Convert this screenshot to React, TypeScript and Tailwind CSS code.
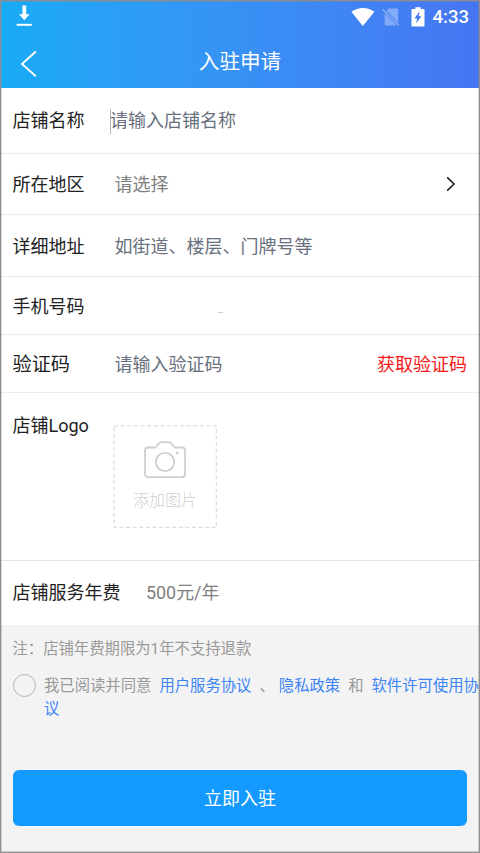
import type { ReactNode } from 'react';

function StatusBar() {
  return (
    <div className="flex h-[33px] items-center justify-between pl-4 pr-[11px] text-white">
      <svg width="16" height="21" viewBox="0 0 16 21" fill="currentColor" className="-mt-[2px]">
        <path d="M6.4 0.6h3.8v8.7h3.3L8.3 15.2 3 9.3h3.4z" />
        <path d="M0.6 18.8h15.2v2H0.6z" />
      </svg>
      <div className="flex items-center">
        <svg width="24" height="20" viewBox="0 0 24 20" fill="currentColor">
          <path d="M0.4 4.8C7 -0.4 17 -0.4 23.4 4.8L11.8 19z" />
        </svg>
        <svg width="18" height="20" viewBox="0 0 18 20" className="ml-[7px]">
          <path d="M6.4 1.5h8.6a1.2 1.2 0 0 1 1.2 1.2v13.2L4.6 3.5zM2.6 6.2L14.6 18.6H4a1.3 1.3 0 0 1-1.3-1.3z" fill="#fff" fillOpacity="0.34" />
          <path d="M0.8 2.4l16 16.2" stroke="#fff" strokeOpacity="0.4" strokeWidth="1.4" />
        </svg>
        <svg width="14" height="20" viewBox="0 0 14 20" className="ml-[11px]">
          <path d="M4.3 0.2h5.4v1.8h3a0.8 0.8 0 0 1 0.8 0.8v16a0.8 0.8 0 0 1-0.8 0.8H1.3a0.8 0.8 0 0 1-0.8-0.8v-16a0.8 0.8 0 0 1 0.8-0.8h3z" fill="#fff" />
          <path d="M8.6 4.2L3.4 11.4h2.8L5 16.6l5.4-7.3H7.6z" fill="#3f76ee" />
        </svg>
        <span className="ml-[8px] text-[18.5px] font-medium leading-5">4:33</span>
      </div>
    </div>
  );
}

function FormRow({ label, className, children }: { label: ReactNode; className: string; children?: ReactNode }) {
  return (
    <div className={`flex items-center border-b border-[#ebebeb] pl-[12.5px] pr-[13px] ${className}`}>
      <span className="w-[102px] shrink-0 text-[#222]">{label}</span>
      {children}
    </div>
  );
}

export default function App() {
  return (
    <div
      lang="zh-CN"
      className="relative flex h-[853px] w-[480px] flex-col overflow-hidden bg-[#f3f3f3] font-[Roboto,'Noto_Sans_CJK_SC',sans-serif] text-[18px] leading-6"
    >
      <header className="h-[88px] bg-linear-to-r from-[#17abf6] to-[#4675f2] text-white">
        <StatusBar />
        <div className="grid h-[55px] grid-cols-[80px_1fr_80px] items-center">
          <svg width="18" height="28" viewBox="0 0 18 28" fill="none" stroke="currentColor" strokeWidth="1.9" className="ml-5 mt-[6px]">
            <path d="M15.8 1.5L2 14l13.8 12.3" />
          </svg>
          <h1 className="pt-[2px] text-center text-[20.6px]">入驻申请</h1>
        </div>
      </header>

      <main className="bg-white">
        <FormRow label="店铺名称" className="h-[66px] pt-px">
          <span className="-ml-[4.5px] h-[25px] w-px bg-[#b5b5b5]" />
          <span className="-ml-px text-[#68707d]">请输入店铺名称</span>
        </FormRow>
        <FormRow label="所在地区" className="h-[61px] pt-[2px]">
          <span className="text-[#808080]">请选择</span>
          <svg width="10" height="16" viewBox="0 0 10 16" fill="none" stroke="#222" strokeWidth="1.6" className="-mt-[2px] ml-auto mr-[11px]">
            <path d="M1.2 1.4L8 8l-6.8 6.6" />
          </svg>
        </FormRow>
        <FormRow label="详细地址" className="h-[62px] pt-[2px]">
          <span className="text-[#68707d]">如街道、楼层、门牌号等</span>
        </FormRow>
        <FormRow label="手机号码" className="h-[58px] pt-[2px]">
          <span className="ml-[103px] mt-[11px] h-px w-[5px] bg-[#ccc]" />
        </FormRow>
        <FormRow label={<span className="text-[19.2px]">验证码</span>} className="h-[58px] pt-[2px]">
          <span className="text-[#68707d]">请输入验证码</span>
          <button className="ml-auto text-[#f51a1a]">获取验证码</button>
        </FormRow>
        <div className="flex h-[168px] border-b border-[#e6e6e6] pl-[12.5px]">
          <span className="mt-[21px] w-[100.5px] shrink-0 text-[#222]">店铺Logo</span>
          <div className="relative mt-8 flex h-[103px] w-[104px] flex-col items-center text-[#cfcfcf]">
            <svg width="104" height="103" viewBox="0 0 104 103" fill="none" className="absolute inset-0">
              <rect x="1" y="0.8" width="102.4" height="101.6" stroke="#dedede" strokeWidth="1.3" strokeDasharray="4 2.6" />
            </svg>
            <svg width="42" height="38" viewBox="0 0 42 38" fill="none" stroke="currentColor" strokeWidth="1.8" strokeLinejoin="round" className="mt-[16px]">
              <path d="M4 6.5h7.5l3.8-4.3q.9-1.1 2.2-1.1h7.2q1.3 0 2.2 1.1l3.8 4.3H38q3 0 3 3v23.6q0 3-3 3H4q-3 0-3-3V9.5q0-3 3-3z" />
              <circle cx="21" cy="21" r="9.2" />
              <circle cx="33.3" cy="12" r="1.4" fill="currentColor" stroke="none" />
            </svg>
            <span className="mt-[10px] text-[16px] font-light leading-6">添加图片</span>
          </div>
        </div>
        <div className="flex h-16 items-center pl-[12.5px]">
          <span className="w-[133.5px] text-[#222]">店铺服务年费</span>
          <span className="text-[17.9px] text-[#808080]">500元/年</span>
        </div>
      </main>

      <section className="pl-[12.5px] pt-3 text-[15.35px] text-[#999]">
        <p>注：店铺年费期限为1年不支持退款</p>
        <div className="mt-[13px] flex">
          <span className="h-[23px] w-[23px] shrink-0 rounded-full border border-[#b4b4b4]" />
          <div className="ml-[8.5px] mt-px whitespace-nowrap leading-[23px]">
            <p className="flex">
              <span>我已阅读并同意</span>
              <span className="ml-2 text-[#3d85f5]">用户服务协议</span>
              <span className="ml-2">、</span>
              <span className="ml-1 text-[#3d85f5]">隐私政策</span>
              <span className="ml-2">和</span>
              <span className="ml-2 text-[#3d85f5]">软件许可使用协</span>
            </p>
            <p className="text-[#3d85f5]">议</p>
          </div>
        </div>
      </section>

      <button className="mx-[13px] mb-[27px] mt-auto h-14 rounded-md bg-[#149aff] pt-px text-white">立即入驻</button>

      <div className="pointer-events-none absolute inset-0 border border-[#8f8c90] shadow-[inset_0_0_0_1px_rgba(143,140,144,0.35)]" />
    </div>
  );
}
